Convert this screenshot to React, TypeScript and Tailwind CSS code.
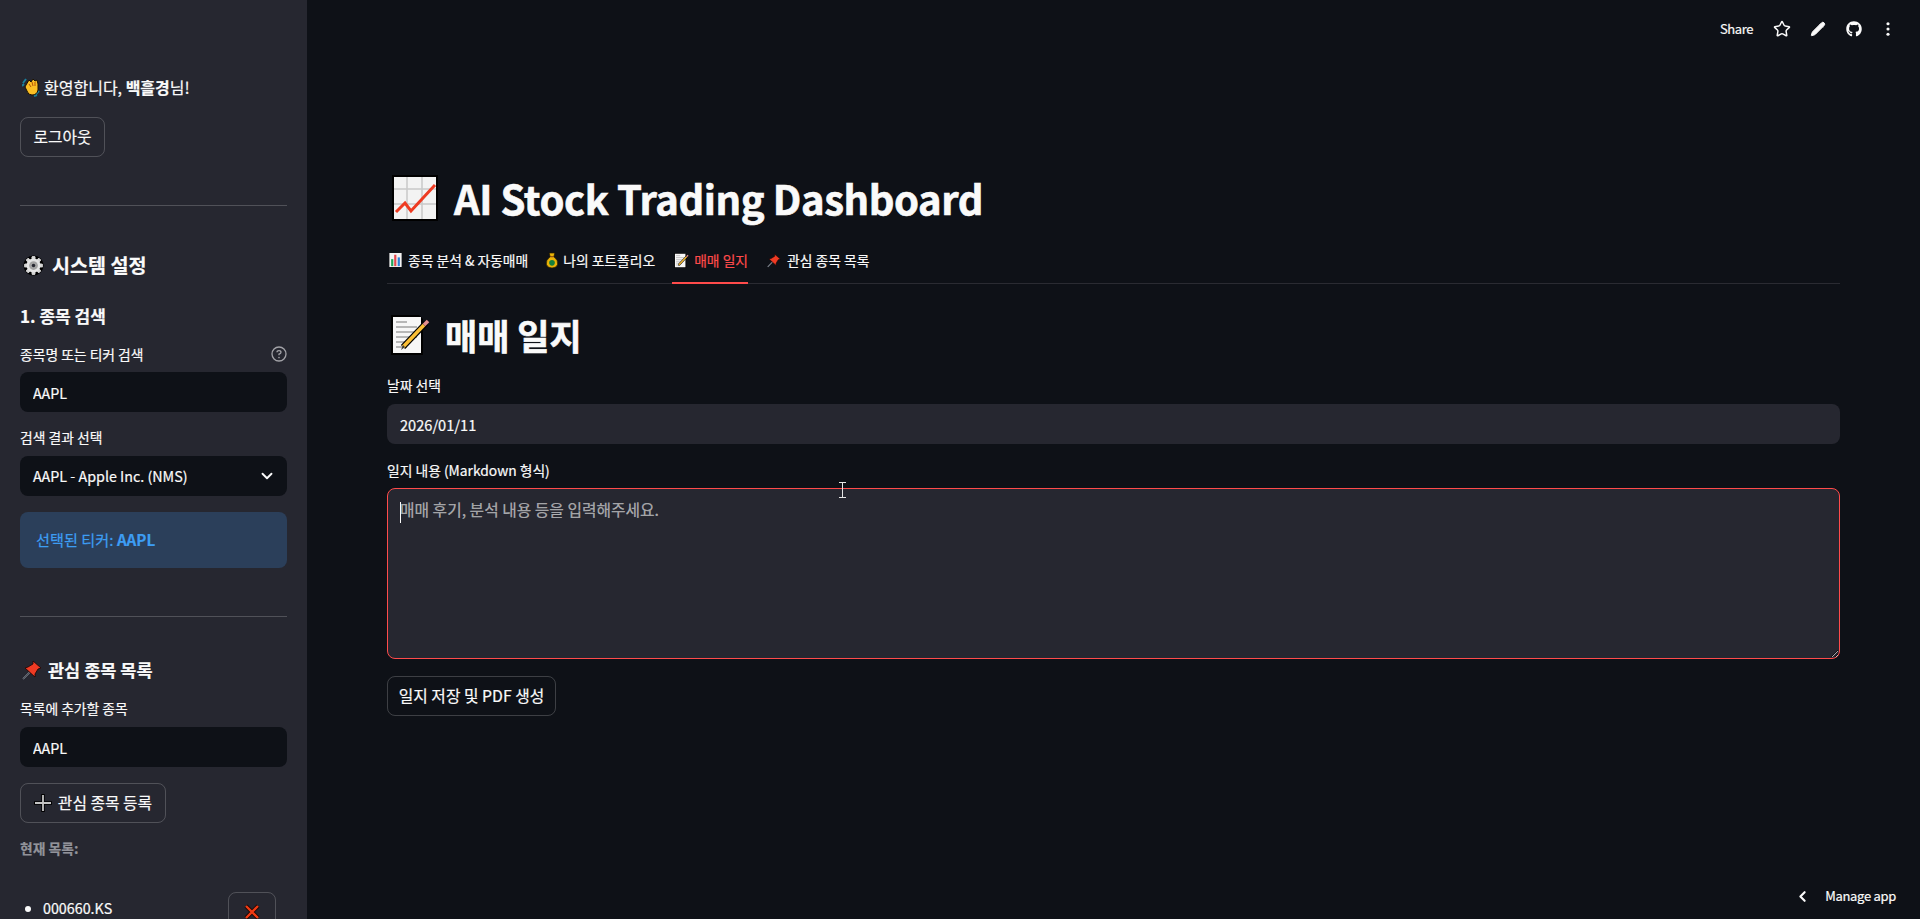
import { ChevronDown, ChevronLeft, Pencil, Star } from "lucide-react";
import { FaGithub } from "react-icons/fa";

type EmojiProps = { className?: string };

function WaveEmoji({ className }: EmojiProps) {
  return (
    <svg viewBox="1 1 18 19" className={className}>
      <path d="M2 6 L5 2 M1 9 L3 7 M15 17 L18 14 M13 19 L16 18" stroke="#1b7f9c" strokeWidth="2" fill="none" />
      <path d="M5 8 L8 3 L10 5 L12 2 L14 4 L16 3 L17 7 L17 13 Q16 18 11 18 Q7 18 6 14 L4 10 Z" fill="#fbbf24" stroke="#1a1204" strokeWidth="1" />
      <path d="M8 7 L10 10 M11 5 L12 9 M14 5 L14 9" stroke="#b45309" strokeWidth="1" fill="none" />
    </svg>
  );
}

function GearEmoji({ className }: EmojiProps) {
  const teeth = [0, 45, 90, 135, 180, 225, 270, 315];
  return (
    <svg viewBox="0 0 24 24" className={className}>
      <circle cx="12" cy="12" r="11.5" fill="#000" />
      {teeth.map((a) => (
        <rect key={a} x="10" y="1.5" width="4" height="21" rx="1" fill="#d4d4d4" transform={`rotate(${a} 12 12)`} />
      ))}
      <circle cx="12" cy="12" r="8" fill="#e5e5e5" />
      <circle cx="12" cy="12" r="5" fill="#a3a3a3" />
      <circle cx="12" cy="12" r="2" fill="#262730" />
    </svg>
  );
}

function PinEmoji({ className }: EmojiProps) {
  return (
    <svg viewBox="0 0 20 20" className={className}>
      <path d="M1 19 L8 12" stroke="#9ca3af" strokeWidth="1.5" />
      <path d="M1 19 L8 12" stroke="#000" strokeWidth="0.5" />
      <path d="M11 1 L19 8 L16 9 L13 14 L13 17 L3 8 L6 7 L11 4 Z" fill="#ef3b24" stroke="#1c0402" strokeWidth="0.8" />
    </svg>
  );
}

function ChartEmoji({ className }: EmojiProps) {
  return (
    <svg viewBox="0 0 46 46" className={className}>
      <rect x="0" y="0" width="46" height="46" fill="#000" />
      <rect x="2" y="2" width="42" height="42" fill="#f3f3f3" />
      <path d="M15 2 V44 M30 2 V44 M2 14 H44 M2 29 H44" stroke="#c9c9c9" strokeWidth="1.5" />
      <path d="M4 37 L13 28 L19 36 L43 10" stroke="#ee3b22" strokeWidth="3" fill="none" />
    </svg>
  );
}

function MemoEmoji({ className }: EmojiProps) {
  return (
    <svg viewBox="0 0 39 40" className={className}>
      <path d="M0 0 H28 L32 4 V40 H0 Z" fill="#000" />
      <rect x="2" y="2" width="28" height="36" fill="#f7f7f7" />
      <path d="M5 7 H16 M5 12 H26 M5 17 H26 M5 22 H26 M5 27 H20 M5 32 H16" stroke="#a3a3a3" strokeWidth="1.5" />
      <path d="M12 32 L35 8" stroke="#000" strokeWidth="6" />
      <path d="M12 32 L33 10" stroke="#fbbf36" strokeWidth="3.5" />
      <path d="M33 10 L37 6" stroke="#e58f8f" strokeWidth="3.5" />
      <path d="M10 35 L12 30 L14 32 Z" fill="#3f3f3f" />
    </svg>
  );
}

function BarsEmoji({ className }: EmojiProps) {
  return (
    <svg viewBox="0 0 14 16" className={className}>
      <rect width="14" height="16" fill="#f3f3f3" />
      <rect x="2" y="7" width="2.5" height="8" fill="#22a559" />
      <rect x="5.5" y="2" width="2.5" height="13" fill="#e5484d" />
      <rect x="9.5" y="5" width="2.5" height="10" fill="#2f7fd8" />
    </svg>
  );
}

function MoneyEmoji({ className }: EmojiProps) {
  return (
    <svg viewBox="0 0 14 18" className={className}>
      <path d="M4 1 H10 L9 5 Q14 9 13 13 Q12 17 7 17 Q2 17 1 13 Q0 9 5 5 Z" fill="#eab308" stroke="#241a00" strokeWidth="0.8" />
      <path d="M5 5 H9" stroke="#78350f" strokeWidth="1" />
      <circle cx="7" cy="11.5" r="3" fill="#15803d" />
    </svg>
  );
}

function PlusEmoji({ className }: EmojiProps) {
  return (
    <svg viewBox="0 0 18 18" className={className}>
      <path d="M9 0 V18 M0 9 H18" stroke="#000" strokeWidth="3.5" />
      <path d="M9 1 V17 M1 9 H17" stroke="#c4c4c4" strokeWidth="1.8" />
    </svg>
  );
}

function CrossEmoji({ className }: EmojiProps) {
  return (
    <svg viewBox="0 0 16 16" className={className}>
      <path d="M2 2 L14 14 M14 2 L2 14" stroke="#1a0400" strokeWidth="4" />
      <path d="M2 2 L14 14 M14 2 L2 14" stroke="#ef3b14" strokeWidth="2.4" />
    </svg>
  );
}

function SecondaryButton({ children, className }: { children: React.ReactNode; className?: string }) {
  return (
    <button
      type="button"
      className={`flex h-10 items-center justify-center rounded-lg border border-[#fafafa33] text-[15.8px] text-[#fafafa] ${className ?? ""}`}
    >
      {children}
    </button>
  );
}

function Sidebar() {
  return (
    <aside className="h-[919px] w-[307px] shrink-0 overflow-hidden bg-[#262730] px-5 pt-[74px]">
      <div className="flex h-[26px] items-center gap-[4px] text-base leading-[26px]">
        <WaveEmoji className="ml-[2px] h-[19px] w-[18px]" />
        <span>
          환영합니다, <b className="font-bold">백흘경</b>님!
        </span>
      </div>
      <SecondaryButton className="mt-[17px] w-[85px]">로그아웃</SecondaryButton>
      <div className="mt-[48px] h-px bg-[#fafafa33]" />

      <h3 className="mt-[44px] flex h-[30px] items-center gap-[8px] text-[19.6px] font-bold">
        <GearEmoji className="ml-[3px] h-[21px] w-[21px]" />
        시스템 설정
      </h3>
      <h4 className="mt-[21px] h-[30px] text-[17px] leading-[30px] font-bold">1. 종목 검색</h4>

      <div className="mt-[11px] flex h-[24px] items-center justify-between text-[13.8px]">
        <span>종목명 또는 티커 검색</span>
        <svg viewBox="0 0 16 16" className="h-4 w-4 text-[#a3a3a8]" fill="none" stroke="currentColor">
          <circle cx="8" cy="8" r="7" strokeWidth="1.3" />
          <path d="M6 6.3 Q6 4.6 8 4.6 Q10 4.6 10 6.2 Q10 7.3 8 8.2 V9.3" strokeWidth="1.3" />
          <circle cx="8" cy="11.6" r="0.8" fill="currentColor" stroke="none" />
        </svg>
      </div>
      <input
        readOnly
        defaultValue="AAPL"
        className="mt-[6px] block h-10 w-full rounded-lg bg-[#0e1117] px-[13px] text-[14.3px] text-[#fafafa] outline-none"
      />

      <div className="mt-[13px] h-[24px] text-[13.8px] leading-[24px]">검색 결과 선택</div>
      <div className="mt-[7px] flex h-10 items-center justify-between rounded-lg bg-[#0e1117] pr-[11px] pl-[13px] text-[14.3px]">
        <span>AAPL - Apple Inc. (NMS)</span>
        <ChevronDown className="h-[18px] w-[18px]" strokeWidth={2.5} />
      </div>

      <div className="mt-4 flex h-14 items-center rounded-lg bg-[#2b3f5a] px-4 pb-[2px] text-[15.2px] text-[#3d9df3]">
        <span>
          선택된 티커: <b className="font-bold">AAPL</b>
        </span>
      </div>
      <div className="mt-12 h-px bg-[#fafafa33]" />

      <h3 className="mt-[38px] flex h-[30px] items-center gap-[6px] text-[17.5px] font-bold">
        <PinEmoji className="ml-[2px] h-5 w-5" />
        관심 종목 목록
      </h3>
      <div className="mt-[11px] h-[24px] text-[13.8px] leading-[24px]">목록에 추가할 종목</div>
      <input
        readOnly
        defaultValue="AAPL"
        className="mt-[7px] block h-10 w-full rounded-lg bg-[#0e1117] px-[13px] text-[14.3px] text-[#fafafa] outline-none"
      />
      <SecondaryButton className="mt-4 w-[146px] gap-[6px]">
        <PlusEmoji className="h-[18px] w-[18px]" />
        관심 종목 등록
      </SecondaryButton>
      <div className="mt-[13px] h-[24px] text-[13.8px] leading-[24px] font-bold text-[#92939a]">현재 목록:</div>

      <div className="mt-[32px] flex items-start justify-between pr-[11px]">
        <ul className="mt-[4px] list-disc pl-[23px] text-[14.3px] leading-[24px] marker:text-[#fafafa]">
          <li>000660.KS</li>
        </ul>
        <SecondaryButton className="w-12">
          <CrossEmoji className="h-4 w-4" />
        </SecondaryButton>
      </div>
    </aside>
  );
}

function Tabs() {
  const tabs = [
    { icon: <BarsEmoji className="ml-[2px] h-[14px] w-[13px]" />, slot: "w-[17px]", label: "종목 분석 & 자동매매" },
    { icon: <MoneyEmoji className="ml-[1px] h-[17px] w-[14px]" />, slot: "w-[15px]", label: "나의 포트폴리오" },
    { icon: <MemoEmoji className="ml-[2px] h-[15px] w-[15px]" />, slot: "w-[18px]", label: "매매 일지", active: true },
    { icon: <PinEmoji className="ml-[3px] h-[15px] w-[14px]" />, slot: "w-[19px]", label: "관심 종목 목록" },
  ];
  return (
    <div className="mt-[17px] flex h-[41px] gap-4 border-b border-[#2a2b32]">
      {tabs.map((t) => (
        <div
          key={t.label}
          className={
            t.active
              ? "-mb-px ml-px flex items-center gap-[4px] border-b-2 border-[#ff4b4b] pb-[4px] text-[13.8px] text-[#ff4b4b]"
              : "flex items-center gap-[4px] pb-[6px] text-[13.8px]"
          }
        >
          <span className={t.slot}>{t.icon}</span>
          <span>{t.label}</span>
        </div>
      ))}
    </div>
  );
}

export default function App() {
  return (
    <div
      className="flex h-[919px] overflow-hidden bg-[#0e1117] text-[#fafafa] [-webkit-text-stroke:0.2px]"
      style={{ fontFamily: '"Noto Sans CJK KR", sans-serif' }}
    >
      <Sidebar />
      <main className="flex min-w-0 flex-1 flex-col">
        <header className="flex h-[58px] items-center justify-end text-[13px] tracking-[-0.4px]">
          <span className="mr-[20px]">Share</span>
          <Star className="mr-[19px] h-[18px] w-[18px]" strokeWidth={2} />
          <Pencil className="mr-[20px] h-[16px] w-[16px]" fill="currentColor" strokeWidth={1.5} />
          <FaGithub className="mr-[24px] h-[16px] w-[16px]" />
          <svg viewBox="0 0 4 16" className="mr-[30px] h-[14px] w-[4px]" fill="currentColor">
            <circle cx="2" cy="2" r="1.8" />
            <circle cx="2" cy="8" r="1.8" />
            <circle cx="2" cy="14" r="1.8" />
          </svg>
        </header>

        <div className="px-20">
          <h1 className="mt-[112px] flex h-[56px] items-center gap-[16px] text-[40px] font-bold tracking-[-0.45px] [-webkit-text-stroke:0.6px]">
            <ChartEmoji className="ml-[5px] h-[46px] w-[46px]" />
            AI Stock Trading Dashboard
          </h1>
          <Tabs />
          <h2 className="mt-[25px] flex h-[52px] items-center gap-[15px] text-[35px] font-bold [-webkit-text-stroke:0.6px]">
            <MemoEmoji className="ml-[4px] h-[40px] w-[39px]" />
            매매 일지
          </h2>

          <div className="mt-[12px] h-[24px] text-[13.8px] leading-[24px]">날짜 선택</div>
          <input
            readOnly
            defaultValue="2026/01/11"
            className="mt-[7px] block h-10 w-full rounded-lg bg-[#262730] px-[13px] text-[14.6px] text-[#fafafa] outline-none"
          />

          <div className="mt-[14px] h-[24px] text-[13.8px] leading-[24px]">일지 내용 (Markdown 형식)</div>
          <div className="relative mt-[6px]">
            <textarea
              readOnly
              placeholder="매매 후기, 분석 내용 등을 입력해주세요."
              className="block h-[171px] w-full rounded-lg border border-[#ff4b4b] bg-[#262730] px-[12px] pt-[9px] pb-[7px] text-[15.8px] leading-[24px] text-[#fafafa] outline-none placeholder:text-[#fafafa99]"
            />
            <span className="absolute top-[14px] left-[13px] h-[21px] w-px bg-[#fafafa]" />
            <svg viewBox="0 0 7 16" className="absolute top-[-6px] left-[452px] h-4 w-[7px]" stroke="#e5e5e5" fill="none">
              <path d="M0 0.5 H7 M0 15.5 H7 M3.5 0.5 V15.5" />
            </svg>
          </div>
          <SecondaryButton className="mt-[17px] w-[169px]">일지 저장 및 PDF 생성</SecondaryButton>
        </div>

        <footer className="mt-auto flex h-[44px] items-center justify-end pb-[2px] text-[13px] tracking-[-0.3px]">
          <ChevronLeft className="mr-[14px] h-[17px] w-[17px]" strokeWidth={3} />
          <span className="mr-6">Manage app</span>
        </footer>
      </main>
    </div>
  );
}
